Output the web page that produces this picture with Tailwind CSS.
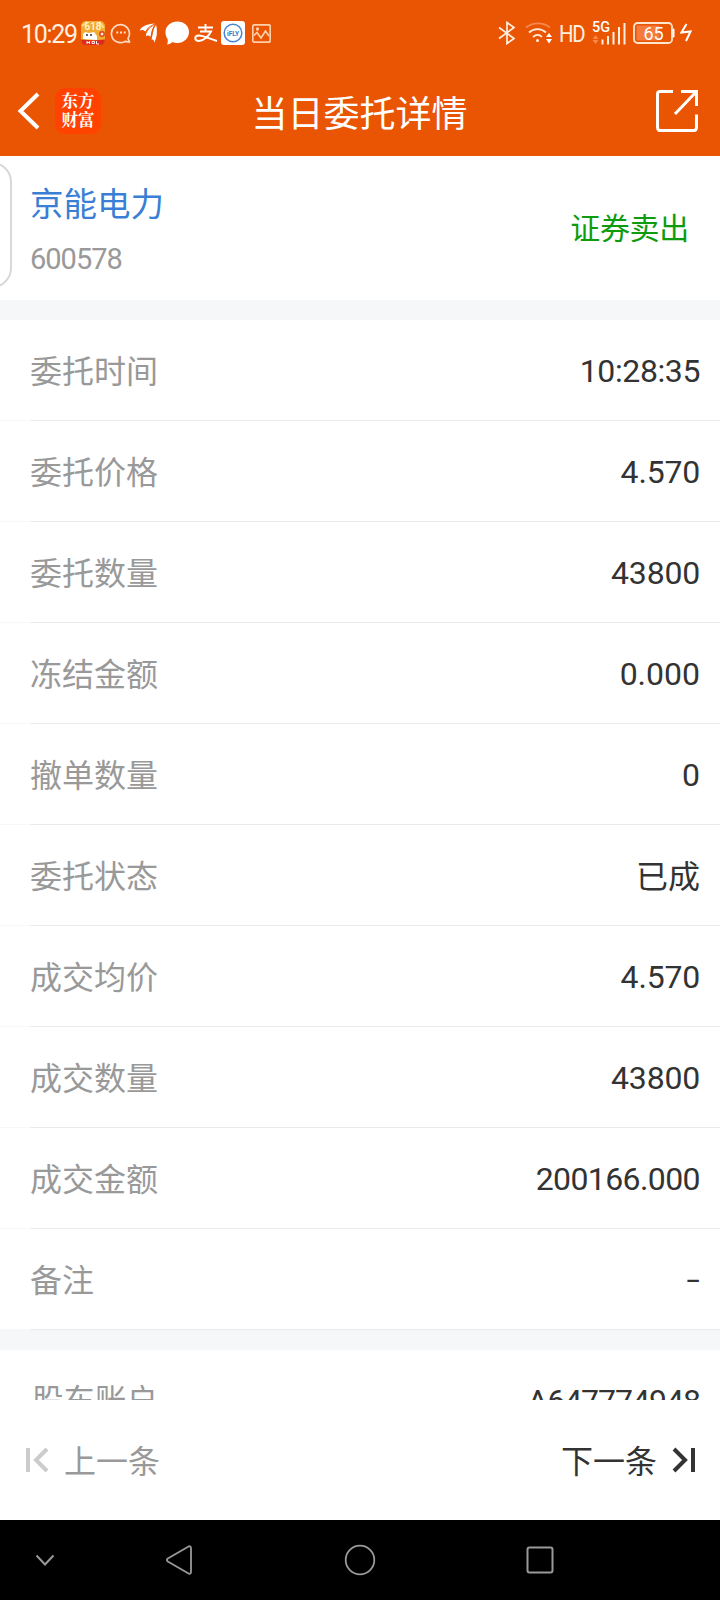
<!DOCTYPE html>
<html lang="zh-CN">
<head>
    <meta charset="UTF-8">
    <meta name="viewport" content="width=device-width, initial-scale=1.0">
    <title>当日委托详情</title>
    <script src="https://cdn.jsdelivr.net/npm/@tailwindcss/browser@4"></script>
</head>
<body class="bg-white font-['Roboto','Noto_Sans_CJK_SC',sans-serif] text-[#333]">
<div class="w-[720px] h-[1600px] flex flex-col overflow-hidden">
    <!-- Header -->
    <header class="h-[156px] shrink-0 bg-[#ea5504] text-white">
        <!-- Status bar -->
        <div class="h-[66px] flex items-center justify-between pl-[21px] pr-[28px] text-[#fff0e0]">
            <div class="flex items-center">
                <span class="w-[57px] pt-0.5 text-[25px] leading-none tracking-[-1.3px] whitespace-nowrap">10:29</span>
                <svg class="ml-[3px]" width="24" height="24" viewBox="0 0 24 24">
                    <rect width="24" height="24" rx="5" fill="#f3ac31"/>
                    <path d="M1 5 6 1M18 1l5 6" stroke="#ffd98a" stroke-width="2"/>
                    <text x="12" y="9" font-size="10" font-weight="500" text-anchor="middle" fill="#fff8d8" font-family="Roboto">618</text>
                    <path d="M2 18v-5l2-2 4 1 5-1 3 4v4z" fill="#fff"/>
                    <circle cx="6" cy="14" r="1" fill="#333"/><circle cx="10" cy="14" r="1" fill="#333"/>
                    <circle cx="21" cy="13" r="2.2" fill="#ffe9a8" stroke="#d8402c" stroke-width="1.4"/>
                    <path d="M0 18.500Q12 20 24 18.500Q24 24 19 24H5Q0 24 0 18.500" fill="#d92b1e"/>
                    <path d="M6 20v3M8.500 20v3M6 21.500h2.500M11 20.500h2.500v2H11zM15.500 20v3h2.500" stroke="#fff" stroke-width=".9" fill="none"/>
                </svg>
                <svg class="ml-[5px]" width="22" height="22" viewBox="0 0 22 22" fill="none" stroke="#ffdcc0" stroke-width="1.700">
                    <path d="M18 16.500A9 9 0 1 0 15 19.400L19.600 20.200Z" stroke-linejoin="round"/>
                    <path d="M6.300 10.500h2M10 10.500h2M13.700 10.500h2" stroke-width="2"/>
                </svg>
                <svg class="ml-[7px]" width="20" height="22" viewBox="0 0 20 22" fill="#fff">
                    <path d="M.5 8.500C3 4 8 2 16 1.500C11 3.500 8 6 6.500 9.500C5 8 3 7.500 .5 8.500Z"/>
                    <path d="M7 14C7 9 10 4 16 2C13 6 12.500 10 11.500 15C10.500 13.500 9 13 7 14Z"/>
                    <path d="M12.500 17.500C14 12 14 7 17 2.500C18.500 8 18.500 15 15 21C15.500 18.500 14.500 17 12.500 17.500Z"/>
                    <path d="M6.800 11Q10 5 16 2M12 16Q12.500 7 17 2.500" fill="none" stroke="#ea5504" stroke-width=".8"/>
                </svg>
                <svg class="ml-[6px]" width="25" height="24" viewBox="0 0 25 24" fill="#fff">
                    <path d="M12.500 0.500C19 .5 24 5 24 11S19 22 12.500 22C10.500 22 9 21.600 7.500 21C6 22.300 4 23.500 2 23.500C2.800 22 3 20 2.600 18C1.200 16 .5 14 .5 11C.5 5 6 .5 12.500 .5Z"/>
                </svg>
                <svg class="ml-[4px]" width="24" height="22" viewBox="0 0 24 22" fill="none" stroke="#fff" stroke-width="1.900">
                    <path d="M4 5.500H19M11.500 2V9M6 9.500H17C15 14 9 19 5 19C0 19 0 13.500 5 13.500C10 13.500 15 17 23 19"/>
                </svg>
                <svg class="ml-[3px]" width="24" height="24" viewBox="0 0 24 24">
                    <rect width="24" height="24" rx="3" fill="#fff"/>
                    <circle cx="12" cy="12" r="8.800" fill="none" stroke="#4a86d0" stroke-width="1.500"/>
                    <text x="12" y="14.600" font-size="6.500" font-weight="700" text-anchor="middle" fill="#3478c8" font-family="Roboto">iFLY</text>
                </svg>
                <svg class="ml-[7px]" width="19" height="19" viewBox="0 0 19 19" fill="none" stroke="#ffd0aa" stroke-width="1.700">
                    <rect x=".8" y=".8" width="17.400" height="17.400" rx="1.500"/>
                    <path d="M2 11.500 5 8.500 9 14 13.500 7 17 12"/>
                    <circle cx="5.500" cy="5" r=".8"/>
                </svg>
            </div>
            <div class="flex items-center">
                <svg width="18" height="24" viewBox="0 0 18 24" fill="none" stroke="#fff0e0" stroke-width="1.700">
                    <path d="M1 6.500 16 17.500 9 22.500V1.500L16 6.500 1 17.500"/>
                </svg>
                <svg class="ml-[9px]" width="28" height="22" viewBox="0 0 28 22" fill="none" stroke="#fff0e0" stroke-width="1.700">
                    <path d="M1 5.500C8 0 18 0 25 5.500" stroke="#f58a4c"/>
                    <path d="M4 10.500C9 6 16 6 21 10.500M8 15C11 12.500 14.500 12.500 17 15"/>
                    <circle cx="12.500" cy="18.500" r="1.500" fill="#fff0e0" stroke="none"/>
                    <path d="M24 11 27 15H21ZM24 21.500 27 17H21Z" fill="#fff" stroke="none"/>
                </svg>
                <span class="ml-[6px] w-[27px] pt-px text-[24px] leading-none tracking-[-1.5px] origin-left scale-x-[0.85]">HD</span>
                <svg class="ml-[6px]" width="34" height="24" viewBox="0 0 34 24">
                    <text x="0" y="11" font-size="14" font-weight="500" textLength="18" lengthAdjust="spacingAndGlyphs" fill="#fff" font-family="Roboto">5G</text>
                    <path d="M3.500 14 6.500 18H.5ZM3.500 23 6.500 19H.5Z" fill="#f58a4c"/>
                    <path d="M10.500 23.500V18.500M16 23.500V15M21.500 23.500V11M27 23.500V6M32.500 23.500V2" stroke="#fff0e0" stroke-width="2"/>
                </svg>
                <svg class="ml-[7px]" width="42" height="22" viewBox="0 0 42 22">
                    <rect x="1" y="1" width="38" height="20" rx="3.500" fill="none" stroke="#ffe6cf" stroke-width="1.800"/>
                    <rect x="3.500" y="3.500" width="23" height="15" rx="1" fill="#f47b3b"/>
                    <path d="M40 7h1v8H40z" fill="#fff" stroke="#fff"/>
                    <text x="20.500" y="17.500" font-size="18" text-anchor="middle" fill="#fff" font-family="Roboto">65</text>
                </svg>
                <svg class="ml-[5px]" width="12" height="20" viewBox="0 0 12 20" fill="none" stroke="#fff" stroke-width="2">
                    <path d="M6.500 1 1.500 9.500 10.500 8.500 6 18"/>
                </svg>
            </div>
        </div>
        <!-- Title bar -->
        <div class="h-[90px] flex items-center justify-between pl-[17px] pr-[21px]">
            <div class="w-[120px] flex items-center">
                <svg width="24" height="38" viewBox="0 0 24 38" fill="none" stroke="#fff" stroke-width="4">
                    <path d="M21 2 3.500 19 21 36"/>
                </svg>
                <div class="ml-[14px] size-[46px] rounded-[10px] bg-[#ff4200] flex flex-col items-center justify-center pb-0.5 text-[16.5px] leading-[19px] font-bold font-['Noto_Serif_CJK_SC','Noto_Sans_CJK_SC',serif]">
                    <span>东方</span>
                    <span>财富</span>
                </div>
            </div>
            <h1 class="pl-[7px] pt-[7px] text-[36px] leading-none">当日委托详情</h1>
            <div class="w-[124px] flex justify-end">
                <svg width="44" height="44" viewBox="0 0 44 44" fill="none" stroke="#fff" stroke-width="3">
                    <path d="M18 2.500H5Q2.500 2.500 2.500 5V38Q2.500 41.500 5 41.500H39Q41.500 41.500 41.500 38V25.500M26 2.500H41.500V17M41 3 20 25"/>
                </svg>
            </div>
        </div>
    </header>

    <!-- Stock -->
    <section class="relative h-[144px] shrink-0 flex items-center justify-between pl-[30px] pr-[31px]">
        <div class="absolute left-[-30px] top-[6px] w-[42px] h-[126px] border-2 border-[#d8d8d8] rounded-[20px]"></div>
        <div class="pt-[6px]">
            <div class="text-[33.5px] leading-[48px] text-[#3a7fd5]">京能电力</div>
            <div class="mt-[7px] text-[29px] leading-[46px] tracking-[-1px] text-[#999]">600578</div>
        </div>
        <div class="pt-[2px] text-[30px] leading-none tracking-[-0.3px] text-[#0f9b0f]">证券卖出</div>
    </section>
    <div class="h-[20px] shrink-0 bg-[#f6f7f9]"></div>

    <!-- Order detail -->
    <main class="h-[1080px] shrink-0 overflow-hidden text-[32px] leading-none">
        <div id="rows"></div>
        <div class="h-[20px] bg-[#f6f7f9]"></div>
        <div class="pl-[32px] h-[101px] pr-[20px] flex items-center justify-between">
            <span class="pt-[3px] text-[31.5px] text-[#999]">股东账户</span><span class="tracking-[-1px]">A647774948</span>
        </div>
    </main>

    <!-- Pager -->
    <div class="h-[120px] shrink-0 flex items-center justify-between pl-[26px] pr-[25px] text-[32px] leading-none">
        <div class="flex items-center text-[#999]">
            <svg width="23" height="26" viewBox="0 0 23 26" fill="none" stroke="#ccc" stroke-width="4">
                <path d="M2 1V25M21 2 10 13 21 24"/>
            </svg>
            <span class="ml-[15px] pt-[4px]">上一条</span>
        </div>
        <div class="flex items-center">
            <span class="mr-[15px] pt-[4px]">下一条</span>
            <svg width="23" height="26" viewBox="0 0 23 26" fill="none" stroke="#333" stroke-width="4">
                <path d="M21 1V25M2 2 13 13 2 24"/>
            </svg>
        </div>
    </div>

    <!-- System navigation -->
    <nav class="h-[80px] shrink-0 bg-black flex items-center pl-[35px]">
        <svg width="20" height="12" viewBox="0 0 20 12" fill="none" stroke="#999" stroke-width="2">
            <path d="M1.500 1.500 10 10.500 18.500 1.500"/>
        </svg>
        <svg class="ml-[110px]" width="28" height="32" viewBox="0 0 28 32" fill="none" stroke="#999" stroke-width="1.800" stroke-linejoin="round">
            <path d="M24 2.200 2.800 14.500Q1 16 2.800 17.500L24 29.800Q26 30 26 28V4Q26 2 24 2.200Z"/>
        </svg>
        <svg class="ml-[151px]" width="32" height="32" viewBox="0 0 32 32" fill="none" stroke="#999" stroke-width="1.800">
            <circle cx="16" cy="16" r="14.300"/>
        </svg>
        <svg class="ml-[150px]" width="28" height="28" viewBox="0 0 28 28" fill="none" stroke="#999" stroke-width="2">
            <rect x="1.500" y="1.500" width="25" height="25" rx="2"/>
        </svg>
    </nav>
</div>
<script>
    var rows = [
        ['委托时间', '10:28:35', 'pt-[2px] tracking-[-0.4px]'],
        ['委托价格', '4.570', 'pt-[2px] tracking-[-0.2px]'],
        ['委托数量', '43800', 'pt-[2px] tracking-[-0.2px]'],
        ['冻结金额', '0.000', 'pt-[2px]'],
        ['撤单数量', '0', 'pt-[2px]'],
        ['委托状态', '已成', 'pt-[4px]'],
        ['成交均价', '4.570', 'pt-[2px] tracking-[-0.2px]'],
        ['成交数量', '43800', 'pt-[2px] tracking-[-0.2px]'],
        ['成交金额', '200166.000', 'pt-[2px] tracking-[-0.6px]'],
        ['备注', '-', 'origin-right scale-x-[1.5]']
    ];
    document.getElementById('rows').innerHTML = rows.map(row =>
        `<div class="h-[101px] flex">
            <div class="w-[30px] border-b border-[#f8f8f8]"></div>
            <div class="flex-1 pr-[20px] border-b border-[#ebebeb] flex items-center justify-between">
                <span class="pt-[3px] text-[#999]">${row[0]}</span><span class="${row[2]}">${row[1]}</span>
            </div>
        </div>`
    ).join('');
</script>
</body>
</html>
